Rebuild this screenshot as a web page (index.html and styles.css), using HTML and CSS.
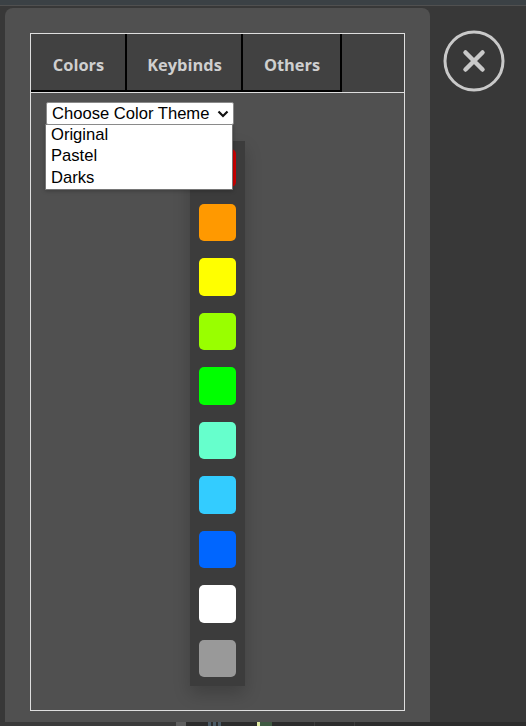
FILE: index.html
```html
<!DOCTYPE html>
<html lang="en">
<head>
<meta charset="utf-8">
<title>Settings</title>
<link rel="stylesheet" href="styles.css">
</head>
<body>
<div class="topbar"></div>
<main class="stage">
  <section class="panel">
    <div class="frame">
      <nav class="tabs">
        <button class="tab tab-colors">Colors</button>
        <button class="tab tab-keybinds">Keybinds</button>
        <button class="tab tab-others">Others</button>
      </nav>
      <div class="content">
        <div class="theme">
          <div class="select-wrap">
            <select class="theme-select">
              <option>Choose Color Theme</option>
            </select>
            <svg class="chevron" width="12" height="8" viewBox="0 0 12 8" fill="none" stroke="#111" stroke-width="2.2">
              <path d="M1.5 1.5L6 6L10.5 1.5"/>
            </svg>
          </div>
          <ul class="theme-list">
            <li>Original</li>
            <li>Pastel</li>
            <li>Darks</li>
          </ul>
        </div>
        <div class="palette">
          <div class="swatch red"></div>
          <div class="swatch orange"></div>
          <div class="swatch yellow"></div>
          <div class="swatch lime"></div>
          <div class="swatch green"></div>
          <div class="swatch aqua"></div>
          <div class="swatch sky"></div>
          <div class="swatch blue"></div>
          <div class="swatch white"></div>
          <div class="swatch grey"></div>
        </div>
      </div>
    </div>
  </section>
  <button class="close" aria-label="Close">
    <svg width="62" height="62" viewBox="0 0 62 62" fill="none" stroke="#c9c9c9">
      <circle cx="31" cy="31" r="29" stroke-width="3"/>
      <path d="M22.5 22.5L39.5 39.5M39.5 22.5L22.5 39.5" stroke-width="4.5" stroke-linecap="round"/>
    </svg>
  </button>
</main>
<footer class="bottombar">
  <span class="seg seg-a"></span>
  <span class="seg seg-b"></span>
  <span class="seg seg-c"></span>
  <span class="seg seg-d"></span>
  <span class="seg seg-e"></span>
  <span class="seg seg-f"></span>
  <span class="seg seg-g"></span>
  <span class="seg seg-h"></span>
  <span class="seg seg-i"></span>
  <span class="seg seg-j"></span>
</footer>
</body>
</html>
```

FILE: styles.css
```css
* { box-sizing: border-box; }
html, body { margin: 0; padding: 0; }
body {
  width: 526px;
  height: 726px;
  overflow: hidden;
  background: #383838;
  font-family: "Liberation Sans", Arial, sans-serif;
  display: flex;
  flex-direction: column;
}
.topbar {
  height: 6px;
  background: #3b4145;
  border-bottom: 1px solid #505050;
  flex: none;
}
.stage {
  flex: none;
  height: 716px;
  padding: 2px 0 0 5px;
  display: flex;
  align-items: flex-start;
}
.panel {
  width: 425px;
  height: 714px;
  background: #505050;
  border-radius: 8px 8px 0 0;
  padding: 25px 25px 11px;
  flex: none;
}
.frame {
  height: 678px;
  border: 1px solid #dedede;
  display: flex;
  flex-direction: column;
}
.tabs {
  height: 59px;
  flex: none;
  display: flex;
  background: #414141;
  border-bottom: 1px solid #dedede;
}
.tab {
  height: 58px;
  padding: 4px 0 0 1px;
  background: #414141;
  border: 0;
  border-right: 2px solid #000;
  border-bottom: 2px solid #000;
  color: #cfcfcf;
  font-family: "Open Sans", sans-serif;
  font-weight: 700;
  font-size: 16.4px;
}
.tab-colors { width: 96px; }
.tab-keybinds { width: 116px; }
.tab-others { width: 99px; }
.content {
  flex: 1;
  position: relative;
  padding: 48px 0 0 159px;
}
.theme {
  position: absolute;
  left: 15px;
  top: 9px;
  z-index: 2;
}
.select-wrap {
  position: relative;
  width: 188px;
  height: 23px;
}
.theme-select {
  display: block;
  appearance: none;
  width: 188px;
  height: 23px;
  margin: 0;
  padding: 0 0 0 5px;
  border: 1px solid #8a8a8a;
  border-radius: 2px;
  font-family: "Liberation Sans", Arial, sans-serif;
  font-size: 16.6px;
  color: #000;
  background: #fff;
}
.chevron {
  position: absolute;
  right: 5px;
  top: 8px;
  pointer-events: none;
}
.theme-list {
  list-style: none;
  margin: -1px 0 0 -1px;
  padding: 0;
  width: 188px;
  height: 66px;
  background: #fff;
  border: 1px solid #767676;
  font-size: 16.6px;
  line-height: 21.4px;
  color: #000;
  box-shadow: 0 1px 4px rgba(0,0,0,.25);
}
.theme-list li { padding-left: 5px; }
.theme-list li:first-child { margin-top: -1px; }
.palette {
  width: 55px;
  height: 545px;
  background: #3c3c3c;
  padding: 8.4px 9px 0;
  display: flex;
  flex-direction: column;
  gap: 17px;
  box-shadow: 0 8px 16px rgba(0,0,0,.2);
}
.swatch {
  width: 37px;
  height: 37.5px;
  border-radius: 5px;
  flex: none;
}
.red { background: #cc0000; }
.orange { background: #ff9900; }
.yellow { background: #ffff00; }
.lime { background: #99ff00; }
.green { background: #00ff00; }
.aqua { background: #66ffcc; }
.sky { background: #33ccff; }
.blue { background: #0066ff; }
.white { background: #ffffff; }
.grey { background: #999999; }
.close {
  margin: 22px 0 0 13px;
  padding: 0;
  width: 62px;
  height: 62px;
  background: none;
  border: 0;
  display: block;
}
.close svg { display: block; }
.bottombar {
  flex: none;
  height: 4px;
  display: flex;
  background: #2c2c2c;
}
.seg { display: block; height: 4px; flex: none; }
.seg-a { width: 176px; background: #3a3a3a; }
.seg-b { width: 10px; background: #5e5e5e; }
.seg-c { width: 22px; background: #2c2c2c; }
.seg-d { width: 14px; background: repeating-linear-gradient(90deg, #4a5a66 0 3px, #2c2c2c 3px 5px); }
.seg-e { width: 35px; background: #2c2c2c; }
.seg-f { width: 3px; background: #dfe9a0; }
.seg-g { width: 12px; background: #3f5a42; }
.seg-h { width: 43px; background: #2c2c2c; border-right: 1px solid #3c3c3c; }
.seg-i { width: 40px; background: #2c2c2c; border-right: 1px solid #3c3c3c; }
.seg-j { flex: 1; background: #2c2c2c; }
```
